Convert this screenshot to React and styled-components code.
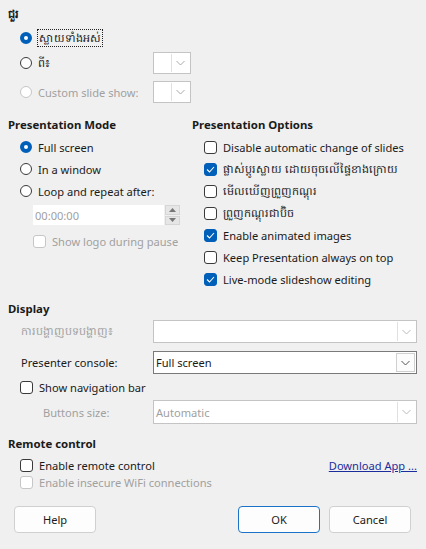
import React from 'react'
import styled, { createGlobalStyle, css } from 'styled-components'

const GlobalStyle = createGlobalStyle`
  body {
    margin: 0;
    background: #f0f0f0;
    font-family: 'Noto Sans', 'Open Sans', sans-serif;
    font-size: 11.1px;
    color: #1a1a1a;
  }
`

const Dialog = styled.div`
  width: 426px;
  height: 549px;
  box-sizing: border-box;
  padding: 5px 9px 0 8px;
  background: #f0f0f0;
`

const Heading = styled.div`
  font-weight: 700;
  font-size: 11.4px;
  height: 18px;
  line-height: 18px;
  margin-top: ${p => p.$top || 0}px;
`

const Row = styled.div`
  display: flex;
  align-items: center;
  height: ${p => p.$h || 22}px;
  padding-left: ${p => p.$indent ?? 12}px;
  margin-top: ${p => p.$top || 0}px;
  color: ${p => (p.$disabled ? '#a0a0a0' : '#1a1a1a')};
  gap: 6px;
`

const Columns = styled.div`
  display: grid;
  grid-template-columns: 184px 1fr;
  margin-top: 13px;
`

const Col = styled.div`
  display: flex;
  flex-direction: column;
`

const RadioDot = styled.span`
  width: 12px;
  height: 12px;
  box-sizing: border-box;
  border-radius: 50%;
  flex-shrink: 0;
  border: 1px solid ${p => (p.$disabled ? '#c6c6c6' : '#3a3a3a')};
  background: #fff;
  ${p => p.$on && css`
    border: 4px solid #005fb8;
  `}
`

const Box = styled.span`
  width: 13px;
  height: 13px;
  box-sizing: border-box;
  border-radius: 3px;
  flex-shrink: 0;
  display: flex;
  align-items: center;
  justify-content: center;
  border: 1px solid ${p => (p.$disabled ? '#c6c6c6' : '#3a3a3a')};
  background: ${p => (p.$on ? '#005fb8' : '#fff')};
  ${p => p.$on && css`border-color: #005fb8;`}
`

const Focus = styled.span`
  outline: 1px dotted #222;
  padding: 0 1px;
  line-height: 16px;
`

const Label = styled.span`
  white-space: nowrap;
`

const Spacer = styled.span`
  flex: 1;
`

const Combo = styled.div`
  display: flex;
  width: ${p => p.$w || 264}px;
  height: ${p => p.$h || 23}px;
  box-sizing: border-box;
  background: #fff;
  border: 1px solid ${p => (p.$active ? '#7a7a7a' : '#c4c4c4')};
  color: ${p => (p.$active ? '#1a1a1a' : '#a0a0a0')};
`

const ComboText = styled.div`
  flex: 1;
  padding-left: 2px;
  display: flex;
  align-items: center;
`

const ComboButton = styled.div`
  width: 17px;
  display: flex;
  align-items: center;
  justify-content: center;
  margin: 1px;
  border-left: 1px solid #e0e0e0;
  ${p => p.$boxed && css`
    border: 1px solid #d0d0d0;
    background: #fcfcfc;
  `}
`

const FormRow = styled.div`
  display: flex;
  align-items: center;
  margin-top: ${p => p.$top || 0}px;
  padding-left: ${p => p.$label || 13}px;
`

const FormLabel = styled.span`
  width: ${p => p.$w || 132}px;
  color: ${p => (p.$disabled ? '#a0a0a0' : '#1a1a1a')};
  white-space: nowrap;
`

const Spin = styled.div`
  display: flex;
  margin-left: 25px;
  margin-top: 3px;
  height: 20px;
`

const SpinField = styled.div`
  width: 129px;
  background: #fff;
  color: #a0a0a0;
  padding-left: 2px;
  display: flex;
  align-items: center;
`

const SpinButtons = styled.div`
  display: flex;
  flex-direction: column;
  gap: 1px;
  margin-left: 1px;
  width: 15px;
`

const SpinBtn = styled.div`
  flex: 1;
  background: #e6e6e6;
  border: 1px solid #d6d6d6;
  display: flex;
  align-items: center;
  justify-content: center;
`

const Link = styled.a`
  color: #1b2d9c;
  text-decoration: underline;
  white-space: nowrap;
`

const ButtonBar = styled.div`
  display: flex;
  align-items: center;
  margin-top: 17px;
  padding-left: 6px;
  padding-right: 6px;
  gap: 9px;
`

const Button = styled.button`
  width: 82px;
  height: 27px;
  font: inherit;
  color: #1a1a1a;
  background: #fdfdfd;
  border: 1px solid ${p => (p.$default ? '#1a73c8' : '#d0d0d0')};
  border-radius: 4px;
`

const Chevron = ({ color = '#888' }) => (
  <svg width="9" height="6" viewBox="0 0 9 6">
    <path d="M0.5 1 L4.5 5 L8.5 1" fill="none" stroke={color} strokeWidth="1" />
  </svg>
)

const Tick = () => (
  <svg width="9" height="7" viewBox="0 0 9 7">
    <path d="M1 3.5 L3.5 6 L8 1" fill="none" stroke="#fff" strokeWidth="1.1" />
  </svg>
)

const Radio = ({ on, disabled, children, focus, ...rest }) => (
  <Row $disabled={disabled} {...rest}>
    <RadioDot $on={on} $disabled={disabled} />
    {focus ? <Focus>{children}</Focus> : <Label>{children}</Label>}
  </Row>
)

const Check = ({ on, disabled, children, extra, ...rest }) => (
  <Row $disabled={disabled} {...rest}>
    <Box $on={on} $disabled={disabled}>{on && <Tick />}</Box>
    <Label>{children}</Label>
    {extra}
  </Row>
)

const options = [
  ['Disable automatic change of slides', false],
  ['ផ្លាស់ប្ដូរស្លាយ ដោយចុចលើផ្ទៃខាងក្រោយ', true],
  ['មើលឃើញព្រួញកណ្ដុរ', false],
  ['ព្រួញកណ្ដុរជាប៊ិច', false],
  ['Enable animated images', true],
  ['Keep Presentation always on top', false],
  ['Live-mode slideshow editing', true],
]

export default function App() {
  return (
    <>
      <GlobalStyle />
      <Dialog>
        <Heading>ជួរ</Heading>
        <Radio on focus $top={4}>ស្លាយទាំងអស់</Radio>
        <Radio $top={3}>
          ពី៖
          <Spacer />
        </Radio>
        <Row $top={-22} $h={22} $indent={145}>
          <Combo $w={38} $h={22}><ComboText /><ComboButton><Chevron color="#aaa" /></ComboButton></Combo>
        </Row>
        <Row $top={7} $disabled>
          <RadioDot $disabled />
          <Label>Custom slide show:</Label>
        </Row>
        <Row $top={-22} $h={22} $indent={145}>
          <Combo $w={38} $h={22}><ComboText /><ComboButton><Chevron color="#aaa" /></ComboButton></Combo>
        </Row>

        <Columns>
          <Col>
            <Heading>Presentation Mode</Heading>
            <Radio on $top={2}>Full screen</Radio>
            <Radio>In a window</Radio>
            <Radio>Loop and repeat after:</Radio>
            <Spin>
              <SpinField>00:00:00</SpinField>
              <SpinButtons>
                <SpinBtn>
                  <svg width="7" height="4" viewBox="0 0 7 4"><path d="M0 4 L3.5 0 L7 4Z" fill="#777" /></svg>
                </SpinBtn>
                <SpinBtn>
                  <svg width="7" height="4" viewBox="0 0 7 4"><path d="M0 0 L3.5 4 L7 0Z" fill="#777" /></svg>
                </SpinBtn>
              </SpinButtons>
            </Spin>
            <Check disabled $indent={25} $top={5}>Show logo during pause</Check>
          </Col>
          <Col>
            <Heading>Presentation Options</Heading>
            {options.map(([text, on], i) => (
              <Check key={i} on={on} $top={i === 0 ? 2 : 0}>{text}</Check>
            ))}
          </Col>
        </Columns>

        <Heading $top={10}>Display</Heading>
        <FormRow $top={2}>
          <FormLabel $disabled>ការបង្ហាញបទបង្ហាញ៖</FormLabel>
          <Combo><ComboText /><ComboButton><Chevron color="#bbb" /></ComboButton></Combo>
        </FormRow>
        <FormRow $top={8}>
          <FormLabel>Presenter console:</FormLabel>
          <Combo $active><ComboText>Full screen</ComboText><ComboButton $boxed><Chevron color="#555" /></ComboButton></Combo>
        </FormRow>
        <Check $top={2}>Show navigation bar</Check>
        <FormRow $top={2} $label={35}>
          <FormLabel $w={110} $disabled>Buttons size:</FormLabel>
          <Combo $h={24}><ComboText>Automatic</ComboText><ComboButton><Chevron color="#bbb" /></ComboButton></Combo>
        </FormRow>

        <Heading $top={11}>Remote control</Heading>
        <Check $top={2} $h={20} extra={<><Spacer /><Link>Download App ...</Link></>}>Enable remote control</Check>
        <Check disabled $h={14}>Enable insecure WiFi connections</Check>

        <ButtonBar>
          <Button>Help</Button>
          <Spacer />
          <Button $default>OK</Button>
          <Button>Cancel</Button>
        </ButtonBar>
      </Dialog>
    </>
  )
}
